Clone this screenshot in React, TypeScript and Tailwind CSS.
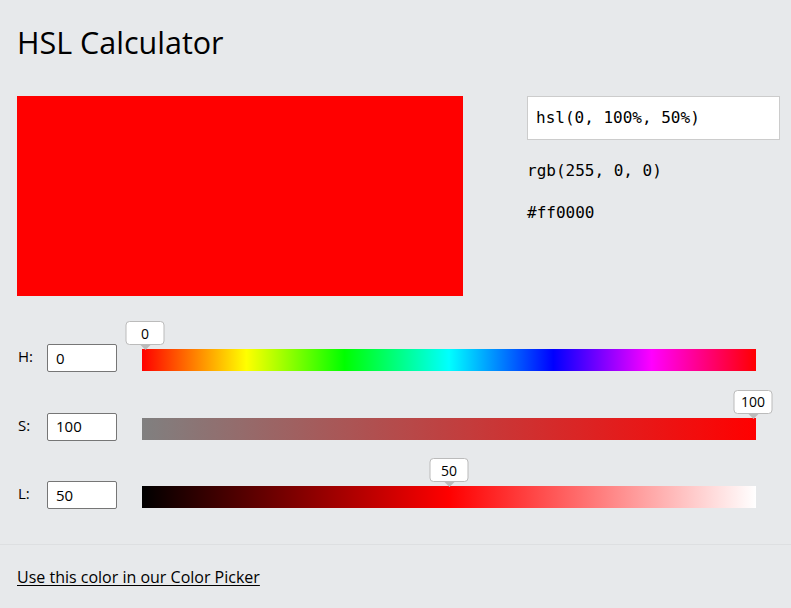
import React from "react";

const sans = { fontFamily: '"Open Sans", "Noto Sans", sans-serif' };
const mono = { fontFamily: '"DejaVu Sans Mono", "Liberation Mono", monospace' };

type Row = {
  label: string;
  value: number;
  max: number;
  gradient: string;
};

const rows: Row[] = [
  {
    label: "H:",
    value: 0,
    max: 360,
    gradient:
      "linear-gradient(to right, #ff0000, #ffff00 17%, #00ff00 33%, #00ffff 50%, #0000ff 67%, #ff00ff 83%, #ff0000)",
  },
  {
    label: "S:",
    value: 100,
    max: 100,
    gradient: "linear-gradient(to right, #808080, #ff0000)",
  },
  {
    label: "L:",
    value: 50,
    max: 100,
    gradient: "linear-gradient(to right, #000000, #ff0000, #ffffff)",
  },
];

const SliderRow = ({ row }: { row: Row }) => {
  const pct = row.value / row.max;
  return (
    <div className="flex items-end h-[28px]">
      <span className="w-[30px] self-center text-[15px] text-black pl-px -mt-[3px]">{row.label}</span>
      <div className="w-[70px] h-[28px] bg-white border border-[#767676] rounded-[2px] flex items-center pl-[8px] text-[15px] text-black">
        {row.value}
      </div>
      <div
        className="relative ml-[25px] mb-px w-[614px] h-[22px]"
        style={{ background: row.gradient }}
      >
        <div
          className="absolute bottom-[21px] -translate-x-1/2 flex flex-col items-center"
          style={{ left: 3 + pct * 608 }}
        >
          <div className="min-w-[39px] h-[24px] px-[6px] bg-white border border-[#bbbbbb] rounded-[4px] flex items-center justify-center text-[14px] text-black">
            {row.value}
          </div>
          <div className="w-0 h-0 border-l-[5px] border-r-[5px] border-t-[5px] border-l-transparent border-r-transparent border-t-[#bbbbbb]" />
        </div>
      </div>
    </div>
  );
};

const App = () => {
  return (
    <div className="w-full min-h-[608px] bg-[#e7e9eb] text-black overflow-hidden" style={sans}>
      <div className="px-[17px]">
        <h1 className="pt-[22px] text-[30.5px] leading-[40px] font-normal">HSL Calculator</h1>

        <div className="flex mt-[34px]">
          <div className="w-[446px] h-[200px] shrink-0 bg-[#ff0000]" />
          <div className="ml-[64px] w-[253px] shrink-0 flex flex-col" style={mono}>
            <div className="w-[253px] h-[44px] bg-white border border-[#cccccc] flex items-center pl-[8px] text-[16px]">
              hsl(0, 100%, 50%)
            </div>
            <div className="mt-[21px] text-[16px] leading-[20px]">rgb(255, 0, 0)</div>
            <div className="mt-[22px] text-[16px] leading-[20px]">#ff0000</div>
          </div>
        </div>

        <div className="mt-[48px] flex flex-col gap-[40.5px]">
          {rows.map((r) => (
            <SliderRow key={r.label} row={r} />
          ))}
        </div>
      </div>

      <div className="mt-[35px] border-t border-[#dddfe1] px-[17px] pt-[20px] pb-[20px]">
        <a href="#" className="text-[16px] text-black underline underline-offset-2">
          Use this color in our Color Picker
        </a>
      </div>
    </div>
  );
};

export default App;
